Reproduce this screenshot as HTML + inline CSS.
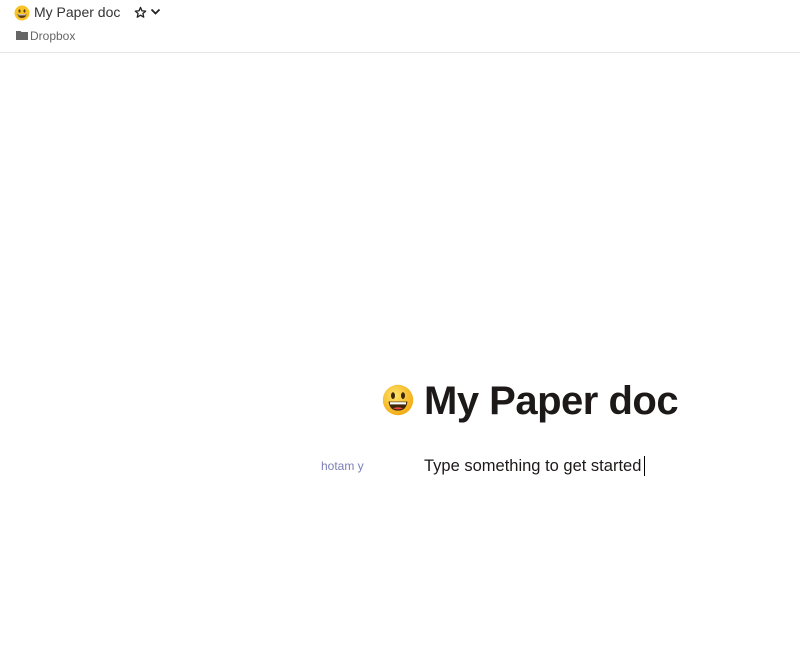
<!DOCTYPE html>
<html><head><meta charset="utf-8"><style>
body{margin:0;width:800px;height:649px;background:#fff;font-family:"Liberation Sans",sans-serif;position:relative;overflow:hidden}
.hdr{position:absolute;left:0;top:0;width:800px;height:52px;border-bottom:1px solid #e6e6e6}
.t{position:absolute;left:34px;top:4px;font-size:14px;color:#333}
.db{position:absolute;left:30px;top:29px;font-size:12px;color:#666}
.h1{position:absolute;left:424px;top:379px;font-size:40px;font-weight:bold;color:#1e1919;letter-spacing:-0.5px}
.p{position:absolute;left:424px;top:457px;font-size:16.5px;color:#1e1919}
.a{position:absolute;left:321px;top:459px;font-size:12px;color:#7b7fb5}
.cur{position:absolute;left:644px;top:456px;width:1px;height:20px;background:#000}
</style></head><body>
<div class="hdr">
<svg style="position:absolute;left:14px;top:5px" width="16" height="16" viewBox="0 0 16 16"><circle cx="8" cy="8" r="7.5" fill="#f7c325"/><ellipse cx="5.5" cy="6" rx="1" ry="1.6" fill="#5a3a10"/><ellipse cx="10.5" cy="6" rx="1" ry="1.6" fill="#5a3a10"/><path d="M3.5 9 H12.5 Q12 13 8 13 Q4 13 3.5 9Z" fill="#5a3a10"/><path d="M4.3 9.3 H11.7 V10.3 H4.3Z" fill="#fff"/></svg>
<div class="t">My Paper doc</div>
<svg style="position:absolute;left:134px;top:6px" width="13" height="13" viewBox="0 0 14 14"><path d="M7 1.5 L8.6 5.2 L12.6 5.5 L9.6 8.1 L10.5 12 L7 9.9 L3.5 12 L4.4 8.1 L1.4 5.5 L5.4 5.2Z" fill="none" stroke="#222" stroke-width="1.4" stroke-linejoin="round"/></svg>
<svg style="position:absolute;left:150px;top:8px" width="11" height="8" viewBox="0 0 11 8"><path d="M1.5 1.5 L5.5 5.5 L9.5 1.5" fill="none" stroke="#222" stroke-width="1.8"/></svg>
<svg style="position:absolute;left:16px;top:30px" width="12" height="10" viewBox="0 0 12 10"><path d="M0 1 H4.5 L5.5 2 H12 V10 H0Z" fill="#666"/></svg>
<div class="db">Dropbox</div>
</div>
<svg style="position:absolute;left:382px;top:384px" width="32" height="32" viewBox="0 0 16 16"><defs><radialGradient id="g" cx="0.4" cy="0.35" r="0.7"><stop offset="0" stop-color="#ffe36b"/><stop offset="1" stop-color="#f1a80f"/></radialGradient></defs><circle cx="8" cy="8" r="7.6" fill="url(#g)"/><ellipse cx="5.5" cy="5.8" rx="1" ry="1.7" fill="#3d2708"/><ellipse cx="10.5" cy="5.8" rx="1" ry="1.7" fill="#3d2708"/><path d="M3.3 8.8 H12.7 Q12.2 13.3 8 13.3 Q3.8 13.3 3.3 8.8Z" fill="#3d2708"/><path d="M4 9.1 H12 V10.2 H4Z" fill="#fff"/><path d="M5.5 12.2 Q8 11 10.5 12.2 Q8 13.2 5.5 12.2Z" fill="#e44"/></svg>
<div class="h1">My Paper doc</div>
<div class="a">hotam y</div>
<div class="p">Type something to get started</div>
<div class="cur"></div>
</body></html>
